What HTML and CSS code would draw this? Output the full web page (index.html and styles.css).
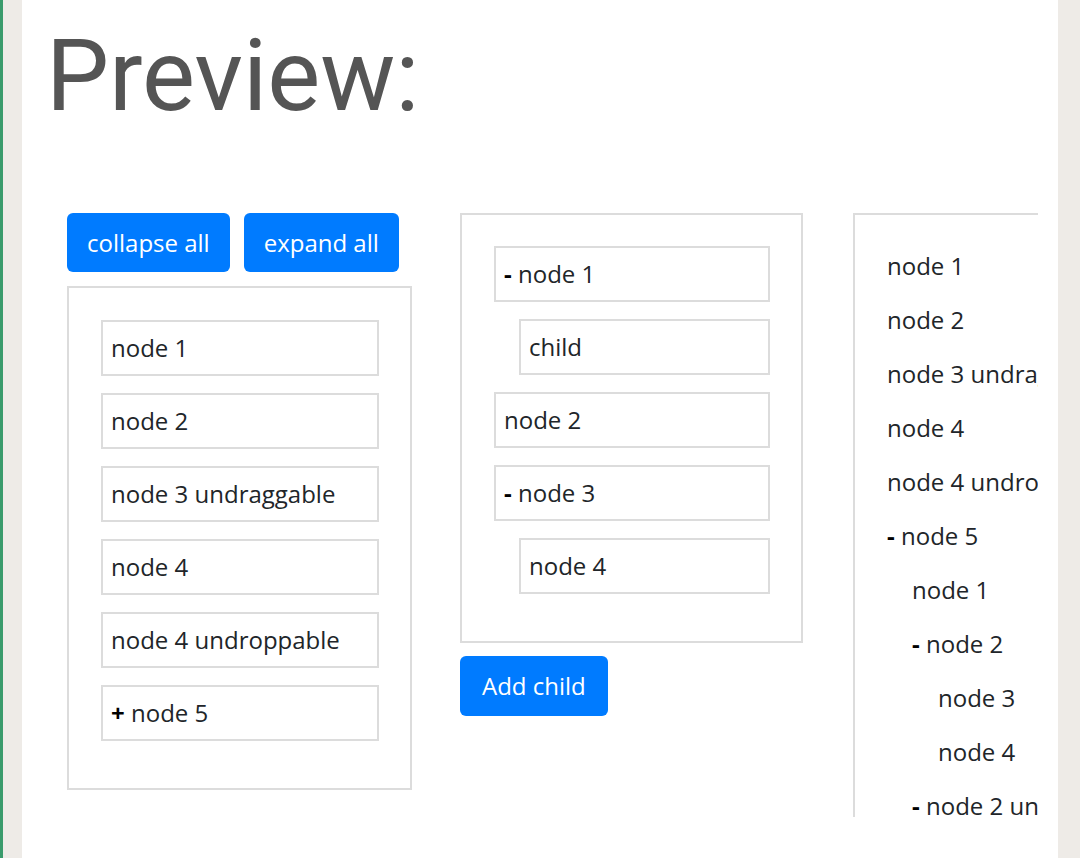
FILE: index.html
```html
<!DOCTYPE html>
<html lang="en">
<head>
  <meta charset="UTF-8" />
  <title>Tree Preview</title>
  <meta name="viewport" content="width=device-width, initial-scale=1" />
  <link rel="stylesheet" href="styles.css">
</head>
<body>
  <div class="page">
    <h1 class="title">Preview:</h1>

    <div class="demo">
      <!-- Fold / unfold tree -->
      <div class="column">
        <div class="toolbar">
          <button class="btn">collapse all</button>
          <button class="btn">expand all</button>
        </div>
        <div class="tree-box tree-box-left">
          <div class="node">node 1</div>
          <div class="node">node 2</div>
          <div class="node">node 3 undraggable</div>
          <div class="node">node 4</div>
          <div class="node">node 4 undroppable</div>
          <div class="node"><b class="toggle">+</b> node 5</div>
        </div>
      </div>

      <!-- Editable tree -->
      <div class="column">
        <div class="tree-box tree-box-middle">
          <div class="node"><b class="toggle">-</b> node 1</div>
          <div class="node child">child</div>
          <div class="node">node 2</div>
          <div class="node"><b class="toggle">-</b> node 3</div>
          <div class="node child">node 4</div>
        </div>
        <button class="btn btn-add">Add child</button>
      </div>

      <!-- Plain tree (clipped by the demo frame) -->
      <div class="column">
        <div class="tree-box tree-box-plain">
          <div class="row">node 1</div>
          <div class="row">node 2</div>
          <div class="row">node 3 undraggable</div>
          <div class="row">node 4</div>
          <div class="row">node 4 undroppable</div>
          <div class="row"><b class="toggle">-</b> node 5</div>
          <div class="row level-1">node 1</div>
          <div class="row level-1"><b class="toggle">-</b> node 2</div>
          <div class="row level-2">node 3</div>
          <div class="row level-2">node 4</div>
          <div class="row level-1"><b class="toggle">-</b> node 2 undroppable</div>
          <div class="row level-2">node 3</div>
        </div>
      </div>
    </div>
  </div>
</body>
</html>
```

FILE: styles.css
```css
* {
  box-sizing: border-box;
}
body {
  margin: 0;
  background: #eeebe7;
  border-left: 3px solid #3a9b6c;
  min-height: 100vh;
  font-family: 'Open Sans', 'Noto Sans', sans-serif;
  color: #212529;
}
.page {
  margin-left: 19px;
  width: 1036px;
  min-height: 858px;
  background: #fff;
}
.title {
  margin: 0;
  padding: 26px 0 0 24px;
  font-family: Roboto, sans-serif;
  font-weight: 400;
  font-size: 100px;
  line-height: 100px;
  color: #555;
}
.demo {
  display: flex;
  align-items: flex-start;
  gap: 48px;
  margin: 87px 0 0 45px;
  width: 971px;
  height: 604px;
  overflow: hidden;
}
.column {
  flex: 0 0 345px;
}
.toolbar {
  display: flex;
  gap: 14px;
  margin-bottom: 14px;
}
.btn {
  padding: 11.5px 20px;
  border: none;
  border-radius: 6px;
  background-color: #007bff;
  color: #fff;
  font-family: inherit;
  font-size: 24px;
  line-height: 36px;
  cursor: pointer;
}
.btn-add {
  margin-top: 13px;
  padding: 12px 22px;
}
.tree-box {
  border: 2px solid #dcdcdc;
}
.tree-box-left,
.tree-box-middle {
  display: flex;
  flex-direction: column;
  gap: 17px;
}
.tree-box-left {
  padding: 32px 31px 47px 32px;
}
.tree-box-middle {
  width: 343px;
  padding: 31px 31px 47px 32px;
}
.node {
  height: 56px;
  padding: 0 8px;
  border: 2px solid #dcdcdc;
  font-size: 24px;
  line-height: 52px;
  white-space: nowrap;
}
.node.child {
  margin-left: 25px;
}
.toggle {
  color: #000;
}
.tree-box-plain {
  width: 345px;
  height: 700px;
  padding: 24px 0 0 32px;
  border-right: none;
  border-bottom: none;
}
.row {
  height: 54px;
  font-size: 24px;
  line-height: 54px;
  white-space: nowrap;
}
.level-1 {
  padding-left: 25px;
}
.level-2 {
  padding-left: 51px;
}
```
